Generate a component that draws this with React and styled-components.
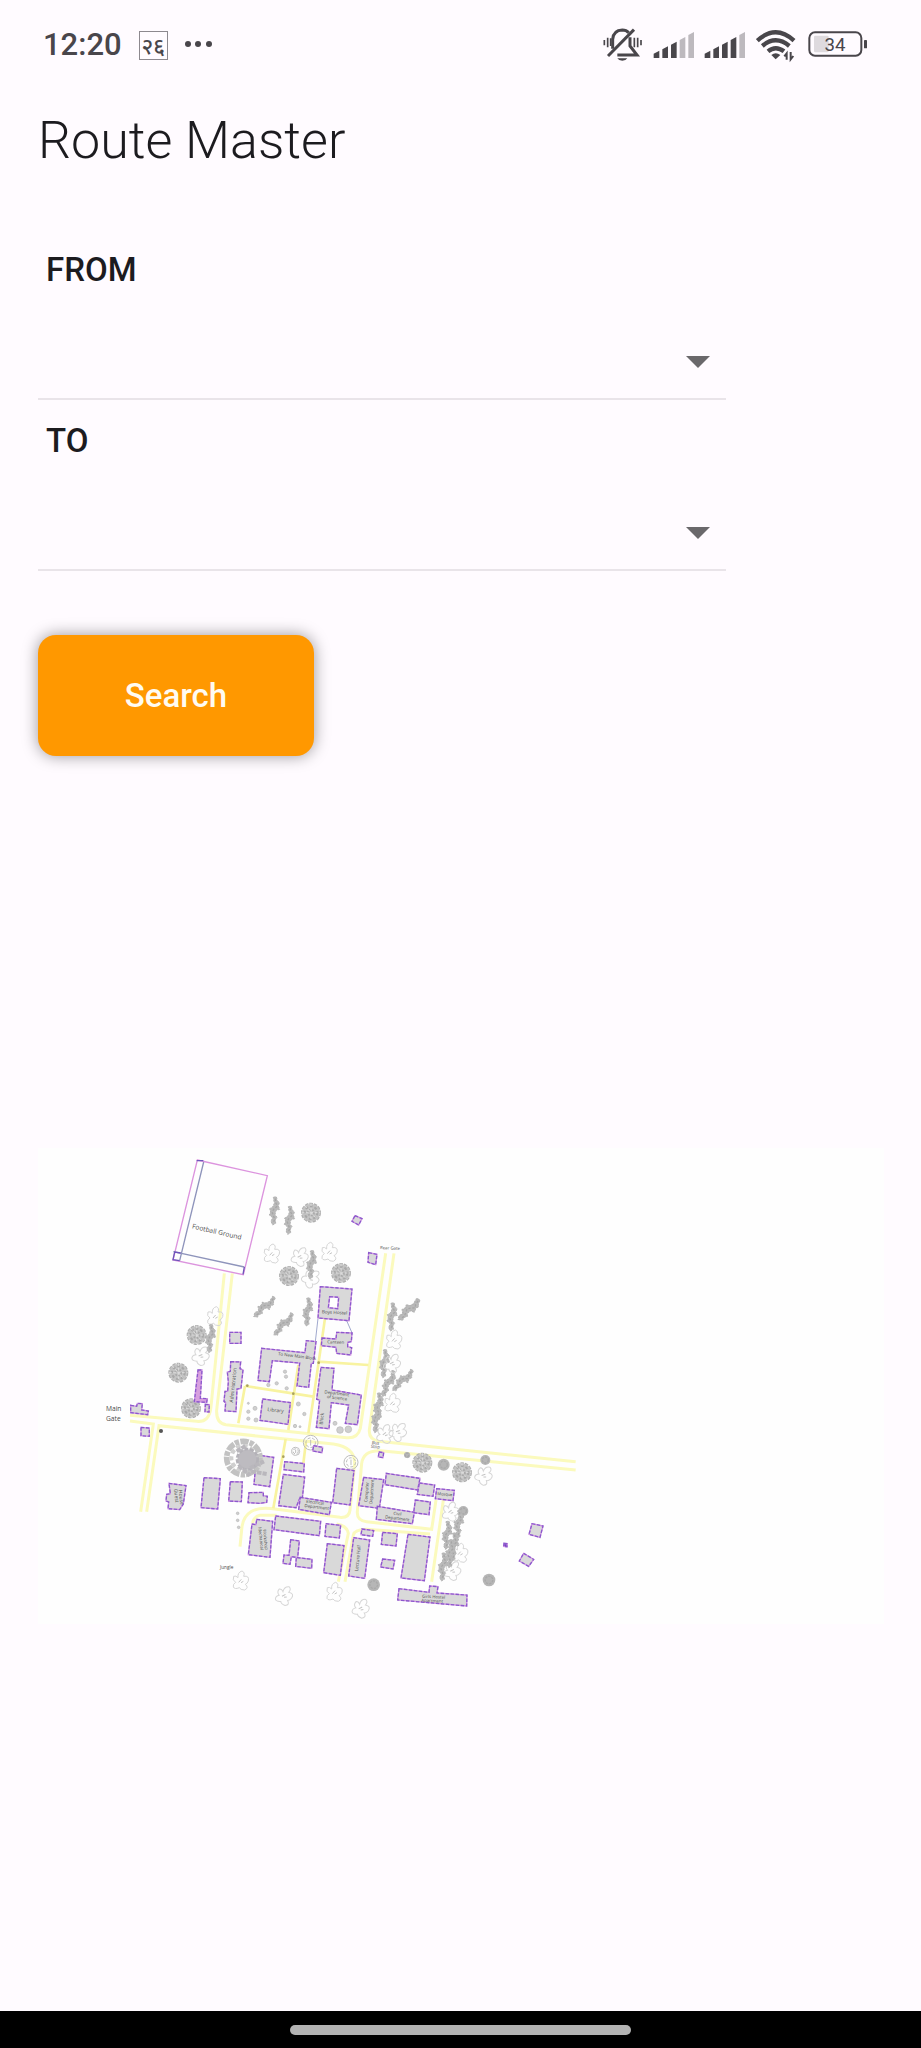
import React from "react";
import styled, { createGlobalStyle } from "styled-components";

const GlobalStyle = createGlobalStyle`
  *, *::before, *::after { box-sizing: border-box; }
  body {
    margin: 0;
    background: #fffbff;
    color: #1c1b1f;
    font-family: Roboto, "Noto Sans", "Liberation Sans", sans-serif;
  }
`;

const Screen = styled.div`
  display: flex;
  flex-direction: column;
  min-height: 100vh;
`;

const StatusBar = styled.header`
  display: flex;
  align-items: center;
  justify-content: space-between;
  padding: 27px 53px 0 43px;
  color: #49464b;
`;

const StatusGroup = styled.div`
  display: flex;
  align-items: center;
  gap: ${(p) => p.$gap}px;
`;

const Clock = styled.time`
  font-size: 31px;
  line-height: 36px;
  font-weight: 500;
`;

const DateBadge = styled.span`
  display: flex;
  align-items: center;
  justify-content: center;
  width: 29px;
  height: 29px;
  border: 1px solid #8d898f;
  font-family: "Noto Sans", Roboto, sans-serif;
  font-size: 22px;
  font-weight: 500;
  line-height: 24px;
`;

const StatusIcon = styled.svg`
  display: block;
  height: 36px;
  width: ${(p) => p.$width}px;
`;

const Main = styled.main`
  display: flex;
  flex-direction: column;
  padding: 48px 37px 40px 38px;
`;

const Title = styled.h1`
  margin: 0;
  font-size: 52px;
  line-height: 60px;
  font-weight: 300;
`;

const RouteForm = styled.form`
  display: flex;
  flex-direction: column;
  align-items: flex-start;
  gap: 21px;
  margin-top: 79px;
`;

const Field = styled.div`
  display: flex;
  flex-direction: column;
  width: 100%;
  max-width: 688px;
`;

const FieldLabel = styled.label`
  padding-left: 8px;
  font-size: 33px;
  line-height: 40px;
  font-weight: 500;
`;

const SelectBox = styled.div`
  display: grid;
  align-items: end;
  justify-items: end;

  > * { grid-area: 1 / 1; }
`;

const Select = styled.select`
  appearance: none;
  width: 100%;
  height: 110px;
  padding: 24px 48px 0 8px;
  border: 0;
  border-bottom: 2px solid #e9e4e9;
  border-radius: 0;
  background: transparent;
  color: inherit;
  font: inherit;
  font-size: 33px;
`;

const Arrow = styled.svg`
  width: 24px;
  height: 12px;
  margin: 0 16px 32px 0;
  pointer-events: none;
`;

const SearchButton = styled.button`
  width: 276px;
  height: 121px;
  margin-top: 43px;
  border: 0;
  border-radius: 18px;
  background: #ff9800;
  color: #fffbf2;
  box-shadow: 0 0 16px rgba(0, 0, 0, 0.4);
  font-family: inherit;
  font-size: 33px;
  line-height: 40px;
  font-weight: 500;
`;

const MapCard = styled.figure`
  margin: 392px 0 0;
  background: #fefefe;
`;

const MapDrawing = styled.svg`
  display: block;
  width: 100%;
  height: auto;
  font-family: "Open Sans", "Noto Sans", sans-serif;
`;

const NavBar = styled.footer`
  display: flex;
  justify-content: center;
  margin-top: auto;
  padding: 14px 0 13px;
  background: #000;
`;

const NavHandle = styled.div`
  width: 37%;
  height: 10px;
  border-radius: 5px;
  background: #b3b3b3;
`;

/* ---------- status icons ---------- */

const BellOff = () => (
  <StatusIcon $width={40} viewBox="69 51 120 108" fill="none" stroke="#49464b" strokeWidth="9">
    <path d="M98 116V88Q100 61 127 60Q139 60 146 68M150 82V108L171 135H112" />
    <path d="M84 138L162 59" strokeWidth="9" />
    <path d="M112 145H142Q138 152 127 152Q116 152 112 145Z" fill="#49464b" stroke="none" />
    <path d="M73 90V106M83 83V112M92 85V108M163 83V112M173 83V112M183 90V106" strokeWidth="5" />
  </StatusIcon>
);

const Signal = ({ x, width, level }) => {
  const bars = [122, 109, 95, 81, 66];
  return (
    <StatusIcon $width={width} viewBox={`${x} 51 ${width * 3} 108`}>
      {bars.map((top, i) => {
        const left = x + 2 + i * 26;
        return (
          <path
            key={top}
            d={`M${left} 144V${top + 9}L${left + 17} ${top}V144Z`}
            fill={i < level ? "#49464b" : "#bdb9be"}
          />
        );
      })}
    </StatusIcon>
  );
};

const Wifi = () => (
  <StatusIcon $width={42} viewBox="528 51 126 108" fill="none" stroke="#49464b" strokeWidth="13">
    <path d="M532 92Q587 42 642 92M547 108Q587 74 628 108M564 124Q587 105 612 124" />
    <path d="M574 135Q587 125 601 135L587 148Z" fill="#49464b" stroke="none" />
    <path d="M620 149V130L613 139M632 126V148L640 138" strokeWidth="6" />
  </StatusIcon>
);

const Battery = () => (
  <StatusIcon $width={60} viewBox="684 51 180 108">
    <rect x="702" y="77" width="44" height="50" rx="4" fill="#dedade" />
    <rect x="688" y="67" width="156" height="70" rx="17" fill="none" stroke="#49464b" strokeWidth="6" />
    <rect x="852" y="90" width="9" height="25" rx="2" fill="#49464b" />
    <text x="765" y="123" textAnchor="middle" fontSize="56" fill="#49464b">34</text>
  </StatusIcon>
);

/* ---------- campus map ---------- */

const Round = ({ x, y, r = 30 }) => (
  <g transform={`translate(${x} ${y}) scale(${r / 30})`}>
    <circle r="27" fill="#c3c3c3" />
    <circle r="28" fill="none" stroke="#b0b0b0" strokeWidth="4" strokeDasharray="11 3" />
    <circle r="19" fill="none" stroke="#a8a8a8" strokeWidth="6" strokeDasharray="8 6" />
    <circle r="9" fill="none" stroke="#aaaaaa" strokeWidth="6" strokeDasharray="5 4" />
    <path d="M0-28V28M-28 0H28M-18-20L18 20" stroke="#dcdcdc" strokeWidth="3" strokeDasharray="8 5" />
  </g>
);

const BigTree = ({ x, y }) => (
  <g transform={`translate(${x} ${y})`} fill="none">
    <circle r="50" stroke="#c2c2c2" strokeWidth="17" strokeDasharray="25 3 13 4" />
    <circle r="36" stroke="#cfcfcf" strokeWidth="12" strokeDasharray="13 8" />
    <circle cx="12" cy="4" r="30" fill="#bdbbc0" />
    <circle cx="12" cy="4" r="31" stroke="#b4b2b8" strokeWidth="8" strokeDasharray="12 5" />
    <path d="M20 30L62 10M24 40L70 48M-14 24L20 52M-20-20L6-36" stroke="#b9b7bc" strokeWidth="12" strokeDasharray="14 3" />
  </g>
);

const Flower = ({ x, y, a = 0 }) => (
  <g transform={`translate(${x} ${y}) rotate(${a})`} fill="none" stroke="#d6d6d6" strokeWidth="3">
    <path d="M-8-10Q-10-26 4-30Q14-26 9-14Q27-17 23 0Q20 8 14 10Q26 20 12 27Q-1 27-4 20Q-18 26-22 18Q-24 9-15 4Q-26-2-21-14Q-14-17-8-10Z" />
    <path d="M-6 4L2-5M1 5L8 1" stroke="#c4c4c4" />
  </g>
);

const Bush = ({ x, y, a = 0 }) => (
  <g transform={`translate(${x} ${y}) rotate(${a})`} fill="none" strokeLinejoin="round">
    <path
      d="M-2-40L7-42L10-30L16-24L13-14L17-4L6-1L3 12L9 20L4 27L5 38L-4 43L-9 32L-4 21L-14 13L-10 4L-13-6L-4-11L1-22Z"
      fill="#bababa"
      stroke="#b4b4b4"
      strokeWidth="3"
      strokeDasharray="7 3"
    />
    <path d="M4-36L5-24L10-14L0-5L-6 4L-2 14L2 26L-2 36" stroke="#a6a6a6" strokeWidth="4" strokeDasharray="7 5" />
  </g>
);

const Dot = ({ x, y, r = 5 }) => <circle cx={x} cy={y} r={r} fill="#cfcfcf" stroke="#b6b6b6" strokeWidth="2" />;

const Solid = ({ x, y, r }) => (
  <g>
    <circle cx={x} cy={y} r={r} fill="#b6b6b6" />
    <circle cx={x} cy={y} r={r * 0.6} fill="none" stroke="#a9a9a9" strokeWidth="4" strokeDasharray="7 3" />
  </g>
);

const Ring = ({ x, y, r }) => (
  <g fill="none" stroke="#bdbdbd" strokeWidth="3">
    <circle cx={x} cy={y} r={r} />
    <circle cx={x} cy={y} r={r * 0.65} strokeDasharray="9 5" />
    <path d={`M${x} ${y - r * 0.4}V${y + r * 0.4}`} />
  </g>
);

const Building = ({ p, fill = "#d9d9d9" }) => (
  <g fill="none" strokeWidth="4">
    <polygon points={p} fill={fill} stroke="#cf93e2" />
    <polygon points={p} stroke="#7446c4" strokeOpacity="0.75" strokeDasharray="10 5" />
  </g>
);

const Label = ({ x, y, a = 4, size = 13, children }) => (
  <text transform={`translate(${x} ${y}) rotate(${a})`} fontSize={size} fill="#4a4a4a">{children}</text>
);

const Sector = ({ x, y, children }) => <g transform={`translate(${x} ${y})`}>{children}</g>;

/* Third value of an entry: the turn of a plant drawn at an angle, else a radius. */
const many = (Part, list) => {
  const key = Part === Flower || Part === Bush ? "a" : "r";
  return list.map(([x, y, v], i) => <Part key={i} x={x} y={y} {...(v === undefined ? {} : { [key]: v })} />);
};

const Roads = () => (
  <g fill="none" stroke="#fbfabd" strokeWidth="9">
    <path d="M403 400L363 800Q359 848 320 844L120 826" />
    <path d="M427 400L380 810Q378 850 408 854L770 893Q803 896 811 865L887 340" />
    <path d="M912 340L838 870Q836 898 866 904L1457 965" />
    <path d="M120 843L190 852L152 1115M170 1115L207 857L730 912Q795 922 794 970L780 1110Q778 1134 750 1132L560 1108Q460 1090 455 1170L450 1220" />
    <path d="M1457 990L872 932Q820 930 815 970L802 1115Q800 1142 830 1145L1025 1168L1038 1080M1060 1080L1025 1325" />
    <path d="M560 1126H510Q490 1130 488 1150M745 1325L775 1180Q770 1156 740 1152M765 1325L790 1185Q795 1168 830 1168L1020 1182" />
    <g stroke="#f8f3a0" strokeWidth="8">
      <path d="M465 738L670 770M465 738L445 850M625 675L595 870M705 535L655 880M685 665L835 675" />
      <path d="M587 897L550 1105M648 905L640 970" />
    </g>
  </g>
);

const CampusMap = () => (
  <MapDrawing viewBox="-156 24 2538 1428" role="img" aria-label="Campus map">
    <Roads />

    {/* football ground */}
    <g fill="none" strokeWidth="4">
      <path d="M322 60L532 107L460 404L249 360Z" stroke="#dc94de" />
      <path d="M341 66L269 362M250 335L463 381" stroke="#8e94bb" />
      <path d="M320 62H340M269 362L249 359L254 336L272 339M463 381L459 403" stroke="#6f55bb" />
    </g>
    <Label x={305} y={265} a={13} size={20}>Football Ground</Label>

    {/* north */}
    <Sector x={450} y={0}>
      {many(Round, [[213, 218], [147, 408], [303, 399]])}
      {many(Flower, [[95, 342], [180, 350, 20], [268, 337], [213, 415, 40]])}
      {many(Bush, [[102, 212], [147, 240], [213, 373], [73, 500, 42], [505, 508, 40]])}
      <Building p="345,227 366,236 356,255 336,244" />
      <Building p="386,338 411,343 407,374 384,367" />
      <Label x={420} y={327} a={3} size={13}>Rear Gate</Label>
    </Sector>

    {/* west */}
    <Sector x={0} y={480}>
      {many(Round, [[320, 105], [265, 218], [303, 325]])}
      {many(Flower, [[375, 50], [333, 167, 25]])}
      <Bush x={360} y={115} />
      <Building p="419,97 453,97 453,130 419,130" />
      <Building p="324,210 336,210 331,295 352,296 350,307 313,305" fill="#d7a0df" />
      <Building p="346,313 358,314 357,336 345,335" />
      <Building p="122,316 140,319 142,310 157,311 155,330 175,333 173,344 122,338" />
      <Building p="153,382 178,384 178,409 153,407" />
      <Building p="422,185 452,186 450,206 459,210 453,265 441,267 438,335 405,333 407,308 402,304 405,274 413,274 415,245 412,216 421,214" />
      <Label x={429} y={308} a={-84} size={15}>Administration</Label>
      <circle cx="213" cy="393" r="6" fill="#555" />
      <Label x={48} y={333} a={0} size={20}>Main</Label>
      <Label x={48} y={362} a={0} size={20}>Gate</Label>
    </Sector>

    {/* centre */}
    <Sector x={420} y={480}>
      {many(Bush, [[160, 72, 36], [232, 35], [485, 50], [538, 28, 40], [462, 190], [518, 240, 40], [444, 320], [438, 355], [474, 250, 20]])}
      {many(Flower, [[492, 120], [487, 190, 20], [487, 310], [505, 395, 30], [465, 402, 10]])}
      {many(Dot, [[165, 215], [168, 230], [140, 250], [115, 255], [170, 265], [205, 312, 6], [223, 342], [195, 378], [210, 380, 3], [55, 310, 3], [75, 325, 6], [55, 335], [55, 356], [78, 360, 6], [315, 370, 6], [330, 390, 10], [355, 388, 10], [533, 466, 7]])}
      {many(Ring, [[242, 428, 22], [197, 454, 12], [363, 487, 21]])}
      <path d="M264 55L256 125M350 62L368 103" stroke="#a0a9ce" strokeWidth="3" fill="none" />
      <Building p="271,-40 366,-33 357,62 264,54" />
      <Building p="299,-10 326,-8 323,26 295,23" fill="#fff" />
      <Label x={275} y={40} a={3} size={14}>Boys Hostel</Label>
      <Building p="276,114 318,117 320,97 366,99 364,125 353,127 353,140 365,143 362,165 320,160 318,142 274,137" />
      <Label x={292} y={130} a={2} size={13}>Canteen</Label>
      <Building p="95,145 225,158 229,122 258,125 250,190 244,190 236,262 201,258 209,189 127,182 118,245 84,241" />
      <Label x={144} y={166} a={7} size={13}>To New Main Block</Label>
      <Building p="273,202 312,205 306,270 394,285 382,374 346,370 356,315 304,308 297,386 259,382 269,300 260,298" />
      <Label x={283} y={280} a={7} size={13}>Department</Label>
      <Label x={290} y={294} a={7} size={13}>of Science</Label>
      <Label x={278} y={374} a={-84} size={14}>Block</Label>
      <Building p="98,297 181,308 174,373 90,361" />
      <Label x={112} y={333} a={6} size={15}>Library</Label>
      <Building p="251,437 278,442 276,458 248,453" />
      <Building p="447,456 461,458 459,473 445,471" />
      <Label x={425} y={432} a={6} size={13}>Bus</Label>
      <Label x={422} y={443} a={6} size={13}>Stop</Label>
      <g fill="#a9a15d"><circle cx="52" cy="257" r="4" /><circle cx="190" cy="281" r="4" /><circle cx="266" cy="188" r="4" /><circle cx="160" cy="470" r="4" /></g>
    </Sector>

    {/* south west */}
    <Sector x={0} y={870}>
      <Building p="500,75 551,82 539,170 492,163" />
      <BigTree x={460} y={84} />
      <Building p="237,160 288,167 280,222 269,239 234,236 236,216 228,213 230,193 241,191" />
      <Label x={252} y={177} a={84} size={15}>Guest</Label>
      <Label x={266} y={180} a={84} size={15}>House</Label>
      <Building p="342,143 391,146 383,237 333,233" />
      <Building p="421,155 457,156 454,215 416,213" />
      <Building p="477,188 520,187 520,197 532,199 530,217 510,220 474,218" />
      <Building p="500,268 548,274 540,382 475,374 486,282 498,284" />
      <Label x={505} y={292} a={84} size={13}>Mechanical</Label>
      <Label x={519} y={298} a={84} size={13}>Workshop</Label>
      {many(Dot, [[443, 250, 4], [443, 271, 4], [446, 292, 4]])}
      <Label x={390} y={417} a={0} size={14}>Jungle</Label>
      {many(Flower, [[452, 453], [583, 497, 20]])}
    </Sector>

    {/* south */}
    <Sector x={540} y={870}>
      {many(Solid, [[521, 104, 18], [411, 75, 9], [311, 464, 19]])}
      {many(Round, [[457, 98], [576, 127]])}
      {many(Flower, [[193, 487], [273, 535, 20], [642, 136, 30]])}
      <Building p="44,95 103,101 101,126 42,119" />
      <Building p="40,133 104,141 97,204 90,203 78,233 26,227" />
      <Building p="91,202 184,217 178,254 86,238" />
      <Building p="200,115 252,122 240,225 188,218" />
      <Building p="17,258 152,274 148,317 12,299" />
      <Building p="168,281 212,286 208,324 165,319" />
      <Building p="62,329 88,333 83,383 126,388 125,415 77,409 79,382 64,380 60,403 39,400 42,375 57,376" />
      <Building p="172,341 222,347 211,436 161,428" />
      <Building p="251,323 299,330 284,445 236,438" />
      <Building p="276,297 311,302 308,319 273,314" />
      <Building p="338,307 382,311 378,348 334,343" />
      <Building p="338,387 374,391 369,417 332,411" />
      <Building p="414,313 480,321 463,452 393,444" />
      <Building p="281,142 341,149 328,235 266,227" />
      <Building p="349,130 450,145 443,180 345,164" />
      <Building p="448,159 494,165 489,199 442,193" />
      <Building p="500,176 553,181 549,212 496,206" />
      <Building p="436,210 481,216 477,254 431,248" />
      <Building p="322,229 433,247 427,281 319,268" />
      <Building p="387,476 477,487 479,468 504,470 501,489 591,495 590,528 383,510" />
      <Label x={108} y={218} a={7}>Electrical</Label>
      <Label x={103} y={231} a={7}>Department</Label>
      <Label x={292} y={217} a={-86} size={13}>Computer</Label>
      <Label x={307} y={222} a={-86} size={13}>Department</Label>
      <Label x={370} y={254} a={7}>Civil</Label>
      <Label x={345} y={265} a={7}>Department</Label>
      <Label x={502} y={195} a={4} size={12}>Mosque</Label>
      <Label x={264} y={424} a={-84} size={14}>Lecture Hall</Label>
      <Label x={456} y={503} a={3} size={13}>Girls Hostel</Label>
      <Label x={454} y={515} a={3} size={13}>Apartment</Label>
    </Sector>

    {/* east */}
    <Sector x={930} y={720}>
      {many(Solid, [[256, 240, 15], [267, 600, 19], [190, 393, 15]])}
      {many(Flower, [[152, 395, 10], [180, 520], [158, 572, 20]])}
      {many(Bush, [[140, 465], [175, 432], [160, 500], [128, 560], [150, 520]])}
      <Building p="396,431 429,438 420,472 387,463" />
      <Building p="371,520 401,538 386,559 358,543" />
      <Building p="312,490 322,491 321,500 311,499" fill="#7446c4" />
    </Sector>
  </MapDrawing>
);

/* ---------- screen ---------- */

const places = ["", "Main Gate", "Library", "Football Ground"];

const PlaceField = ({ id, label }) => (
  <Field>
    <FieldLabel htmlFor={id}>{label}</FieldLabel>
    <SelectBox>
      <Select id={id} name={id} defaultValue="">
        {places.map((place) => (
          <option key={place} value={place}>{place}</option>
        ))}
      </Select>
      <Arrow viewBox="0 0 24 12" aria-hidden="true">
        <path d="M0 0H24L12 12Z" fill="#6a686b" />
      </Arrow>
    </SelectBox>
  </Field>
);

export default function App() {
  return (
    <Screen>
      <GlobalStyle />
      <StatusBar>
        <StatusGroup $gap={17}>
          <Clock>12:20</Clock>
          <DateBadge>२६</DateBadge>
          <StatusIcon $width={28} viewBox="0 0 28 36" fill="#49464b">
            <circle cx="3" cy="17" r="3" />
            <circle cx="13" cy="17" r="3" />
            <circle cx="24" cy="17" r="3" />
          </StatusIcon>
        </StatusGroup>
        <StatusGroup $gap={10}>
          <BellOff />
          <Signal x={219} width={41} level={3} />
          <Signal x={372} width={42} level={4} />
          <Wifi />
          <Battery />
        </StatusGroup>
      </StatusBar>
      <Main>
        <Title>Route Master</Title>
        <RouteForm onSubmit={(e) => e.preventDefault()}>
          <PlaceField id="from" label="FROM" />
          <PlaceField id="to" label="TO" />
          <SearchButton type="submit">Search</SearchButton>
        </RouteForm>
        <MapCard>
          <CampusMap />
        </MapCard>
      </Main>
      <NavBar>
        <NavHandle />
      </NavBar>
    </Screen>
  );
}
